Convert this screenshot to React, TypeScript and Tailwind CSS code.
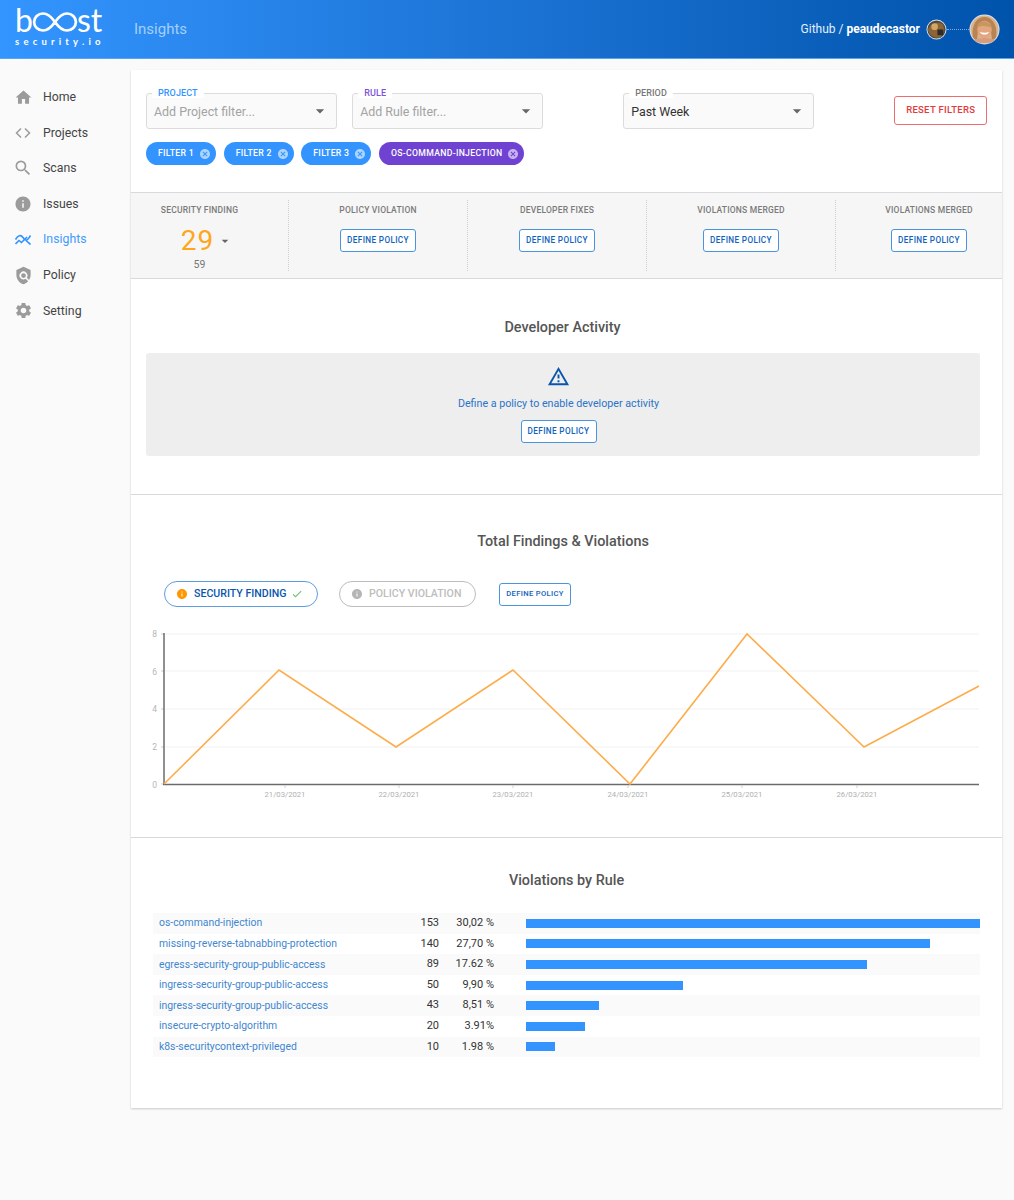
import { MdArrowDropDown, MdCancel, MdCheck, MdHome, MdInfo, MdPolicy, MdSearch, MdSettings, MdOutlineWarningAmber } from 'react-icons/md';

const navItems = [
  { label: 'Home', icon: <MdHome className="w-[19px] h-[19px]" /> },
  { label: 'Projects', icon: <CodeIcon /> },
  { label: 'Scans', icon: <MdSearch className="w-[20px] h-[20px]" /> },
  { label: 'Issues', icon: <MdInfo className="w-[18px] h-[18px]" /> },
  { label: 'Insights', icon: <InsightsIcon />, active: true },
  { label: 'Policy', icon: <MdPolicy className="w-[19px] h-[19px]" /> },
  { label: 'Setting', icon: <MdSettings className="w-[19px] h-[19px]" /> },
];

const rules = [
  { name: 'os-command-injection', count: 153, pct: '30,02 %', bar: 454 },
  { name: 'missing-reverse-tabnabbing-protection', count: 140, pct: '27,70 %', bar: 404 },
  { name: 'egress-security-group-public-access', count: 89, pct: '17.62 %', bar: 341 },
  { name: 'ingress-security-group-public-access', count: 50, pct: '9,90 %', bar: 157 },
  { name: 'ingress-security-group-public-access', count: 43, pct: '8,51 %', bar: 73 },
  { name: 'insecure-crypto-algorithm', count: 20, pct: '3.91%', bar: 59 },
  { name: 'k8s-securitycontext-privileged', count: 10, pct: '1.98 %', bar: 29 },
];

function CodeIcon() {
  return (
    <svg viewBox="0 0 16 12" className="w-[16px] h-[12px]" fill="none" stroke="currentColor" strokeWidth="1.5">
      <path d="M6 1.5 1.5 6 6 10.5M10 1.5 14.5 6 10 10.5" />
    </svg>
  );
}

function InsightsIcon() {
  return (
    <svg viewBox="0 0 16 11" className="w-[16px] h-[11px]" fill="none" stroke="currentColor" strokeWidth="1.6">
      <path d="M0.5 5.5C3 1 6 .5 8 3.500S11.500 8.500 15.500 1.500" />
      <path d="M0.500 10 4 6.500 6.500 8.500 12 3M11 6.500l4.500 4" />
    </svg>
  );
}

function Logo() {
  return (
    <div className="flex flex-col w-[95px] -mt-[3px] text-white font-['Lato',sans-serif]">
      <div className="flex items-end h-[24px]">
        <span className="text-[32px] leading-[24px] font-normal">b</span>
        <svg viewBox="0 0 44 20" className="w-[46px] h-[20px] -ml-[1px]" preserveAspectRatio="none" fill="none" stroke="currentColor" strokeWidth="2.6">
          <path d="M22 10C18 4 14 1.500 10.500 1.500A8.500 8.500 0 0 0 10.500 18.500C14 18.500 18 16 22 10C26 4 30 1.500 33.500 1.500A8.500 8.500 0 0 1 33.500 18.500C30 18.500 26 16 22 10Z" />
        </svg>
        <span className="text-[32px] leading-[24px] font-normal -ml-[1px]">st</span>
      </div>
      <span className="mt-[5px] text-[9.500px] leading-[10px] font-bold tracking-[4.200px]">security.io</span>
    </div>
  );
}

function Avatars() {
  return (
    <div className="flex items-center ml-[6px]">
      <svg viewBox="0 0 22 22" className="w-[21px] h-[21px]">
        <circle cx="11" cy="11" r="10.500" fill="#e0e0e0" />
        <circle cx="11" cy="11" r="9.500" fill="#4a4a48" />
        <path d="M2 11C4 5 12 2 17 5 20 9 19 15 15 19 9 21 3 17 2 11Z" fill="#8d6436" />
        <circle cx="9" cy="8" r="3.500" fill="#d3a566" />
        <path d="M12 11h6v6h-6Z" fill="#2d2a28" />
      </svg>
      <span className="w-[22px] border-t border-dotted border-white/50" />
      <svg viewBox="0 0 32 32" className="w-[31px] h-[31px]">
        <circle cx="16" cy="16" r="15.500" fill="#dbe4ee" />
        <circle cx="16" cy="16" r="14.500" fill="#d9b48f" />
        <path d="M4 24C2 10 9 3 16 3S30 10 28 24L24 28 22 14 10 14 8 28Z" fill="#b98453" />
        <ellipse cx="16" cy="16" rx="7.500" ry="9" fill="#e3a77f" />
        <path d="M8.500 14C10 8 13 7 17 8 21 9 23 11 23.500 14 19 13 14 11 8.500 14Z" fill="#c8965f" />
        <path d="M11 18.500C13 22 19 22 21 18.500 18 19.500 14 19.500 11 18.500Z" fill="#fff" />
        <path d="M5 27C9 24 23 24 27 27 22 31 10 31 5 27Z" fill="#d79d7c" />
      </svg>
    </div>
  );
}

function OutlinedSelect({ label, labelColor, value, muted }: { label: string; labelColor: string; value: string; muted?: boolean }) {
  return (
    <div className="relative h-[36px] w-[192px] flex items-center justify-between pl-[7px] pr-[6px] bg-[#fafafa] border-[1.5px] border-[#dcdcdc] rounded-[3px]">
      <span className={`absolute -top-[5px] left-[5px] px-[6px] bg-white text-[9px] leading-[9px] font-medium tracking-[0.1px] ${labelColor}`}>{label}</span>
      <span className={`pt-[2px] text-[12.400px] ${muted ? 'text-[#a3a3a3]' : 'text-[#333]'}`}>{value}</span>
      <MdArrowDropDown className="w-[20px] h-[20px] text-[#666]" />
    </div>
  );
}

function Chip({ label, purple }: { label: string; purple?: boolean }) {
  return (
    <span className={`inline-flex items-center h-[23px] pl-[12px] pr-[5px] rounded-full text-white text-[8.700px] font-medium tracking-[0.3px] ${purple ? 'bg-[#6f42d2]' : 'bg-[#3394ff]'}`}>
      {label}
      <MdCancel className="w-[12px] h-[12px] ml-[5px] text-white/60" />
    </span>
  );
}

function DefinePolicy({ small }: { small?: boolean }) {
  return (
    <button className={`block h-[23px] ${small ? 'w-[72px] text-[7.600px]' : 'w-[76px] text-[8.200px]'} bg-white border border-[#4a94de] rounded-[3px] text-[#0f62bd] font-medium tracking-[0.35px]`}>
      DEFINE POLICY
    </button>
  );
}

function StatCol({ title, width, className, children }: { title: string; width: string; className?: string; children: React.ReactNode }) {
  return (
    <div className={`${width} ${className ?? ''} h-[71px] flex flex-col items-center border-r border-dotted border-[#cfcfcf] last:border-r-0`}>
      <span className="mt-[5px] text-[8.500px] leading-[11px] font-medium tracking-[0.2px] text-[#7a7a7a]">{title}</span>
      {children}
    </div>
  );
}

function Chart() {
  const ys = [634, 671, 709, 747];
  const xs = [285, 399, 513, 628, 742, 857];
  const dates = ['21/03/2021', '22/03/2021', '23/03/2021', '24/03/2021', '25/03/2021', '26/03/2021'];
  return (
    <svg viewBox="140 625 840 180" className="w-[840px] h-[180px] block">
      {ys.map((y) => (
        <line key={y} x1="164" x2="979" y1={y} y2={y} stroke="#f1f1f1" />
      ))}
      {[8, 6, 4, 2, 0].map((n, i) => (
        <text key={n} x="157" y={637 + i * 37.700} textAnchor="end" fontSize="8.500" fill="#b5b5b5" fontFamily="Roboto">{n}</text>
      ))}
      {[634, 671, 709, 747, 784].map((y) => (
        <line key={y} x1="161" x2="164" y1={y} y2={y} stroke="#cfcfcf" />
      ))}
      <line x1="164" x2="164" y1="633" y2="785" stroke="#6b6b6b" strokeWidth="1.500" />
      <line x1="163" x2="979" y1="784.500" y2="784.500" stroke="#6b6b6b" strokeWidth="1.500" />
      {xs.map((x, i) => (
        <g key={x}>
          <line x1={x} x2={x} y1="785" y2="788" stroke="#cfcfcf" />
          <text x={x} y="797" textAnchor="middle" fontSize="7.700" fill="#b0b0b0" fontFamily="Roboto">{dates[i]}</text>
        </g>
      ))}
      <polyline points="164,784 279,670 396,747 513,670 630,784 747,634 864,747 979,686" fill="none" stroke="#fdac4a" strokeWidth="1.600" />
    </svg>
  );
}

export default function App() {
  return (
    <div className="min-h-[1200px] bg-[#fafafa] font-['Roboto',sans-serif]">
      <header className="h-[59px] flex items-center justify-between pl-[15px] pr-[14px] bg-gradient-to-r from-[#3395ff] to-[#0053ab] border-b border-[#5aa5ef]">
        <div className="flex items-center">
          <Logo />
          <span className="ml-[24px] pt-[1px] text-[15px] text-[#a3cfff]">Insights</span>
        </div>
        <div className="flex items-center text-[12px] text-white">
          <span className="text-[#e3effb]">Github /&nbsp;</span>
          <span className="font-bold">peaudecastor</span>
          <Avatars />
        </div>
      </header>

      <div className="flex">
        <nav className="w-[131px] shrink-0 pt-[20.500px]">
          {navItems.map((item) => (
            <div key={item.label} className={`h-[35.600px] flex items-center text-[12.300px] ${item.active ? 'text-[#429bff]' : 'text-[#444]'}`}>
              <span className={`w-[48px] pl-[11px] pr-[13px] flex justify-center shrink-0 -mr-[5px] ${item.active ? 'text-[#3394ff]' : 'text-[#9b9b9b]'}`}>{item.icon}</span>
              {item.label}
            </div>
          ))}
        </nav>

        <main className="w-[871px] mt-[11px] mb-[92px] bg-white shadow-[0_1px_2px_rgba(0,0,0,0.2)]">
          <section className="h-[122px] px-[15px] pt-[23px]">
            <div className="flex items-start">
              <OutlinedSelect label="PROJECT" labelColor="text-[#3394ff]" value="Add Project filter..." muted />
              <div className="w-[15px]" />
              <OutlinedSelect label="RULE" labelColor="text-[#7b52dc]" value="Add Rule filter..." muted />
              <div className="w-[80px]" />
              <OutlinedSelect label="PERIOD" labelColor="text-[#777]" value="Past Week" />
              <button className="ml-[80px] mt-[3px] w-[93px] h-[29px] border border-[#ec6e6e] rounded-[3px] text-[#e23b3b] text-[9.500px] font-medium tracking-[0.3px]">
                RESET FILTERS
              </button>
            </div>
            <div className="flex gap-[7.600px] mt-[13px]">
              <Chip label="FILTER 1" />
              <Chip label="FILTER 2" />
              <Chip label="FILTER 3" />
              <Chip label="OS-COMMAND-INJECTION" purple />
            </div>
          </section>

          <section className="h-[87px] flex items-center bg-[#f6f6f6] border-y border-[#d8d8dd]">
            <StatCol title="SECURITY FINDING" width="w-[158px]" className="pr-[20px]">
              <div className="flex items-center mt-[7px] ml-[15px]">
                <span className="text-[28px] leading-[36px] tracking-[1px] text-[#ffa61a]">29</span>
                <MdArrowDropDown className="w-[16px] h-[16px] ml-[3px] text-[#666]" />
              </div>
              <span className="text-[10.500px] leading-[12px] text-[#777]">59</span>
            </StatCol>
            <StatCol title="POLICY VIOLATION" width="w-[179px]"><div className="mt-[13px]"><DefinePolicy /></div></StatCol>
            <StatCol title="DEVELOPER FIXES" width="w-[179px]"><div className="mt-[13px]"><DefinePolicy /></div></StatCol>
            <StatCol title="VIOLATIONS MERGED" width="w-[189px]"><div className="mt-[13px]"><DefinePolicy /></div></StatCol>
            <StatCol title="VIOLATIONS MERGED" width="w-[166px]" className="pl-[20px]"><div className="mt-[13px]"><DefinePolicy /></div></StatCol>
          </section>

          <section className="h-[216px] px-[15px] border-b border-[#d8d8dd]">
            <h2 className="pt-[40px] pr-[8px] text-center text-[14.400px] leading-[18px] font-medium text-[#555]">Developer Activity</h2>
            <div className="mt-[16px] pr-[9px] w-[834px] h-[103px] flex flex-col items-center bg-[#eeeeee] rounded-[3px]">
              <MdOutlineWarningAmber className="mt-[12px] w-[23px] h-[23px] text-[#0a56ad]" />
              <p className="mt-[9px] text-[10.700px] leading-[14px] text-[#2b74c7]">Define a policy to enable developer activity</p>
              <div className="mt-[9px]"><DefinePolicy /></div>
            </div>
          </section>

          <section className="h-[343px] border-b border-[#d8d8dd]">
            <h2 className="pt-[38px] pr-[7px] text-center text-[14.400px] leading-[18px] font-medium text-[#555]">Total Findings & Violations</h2>
            <div className="flex items-center mt-[30px] ml-[33px]">
              <span className="w-[154px] h-[26px] flex items-center pl-[11px] rounded-full border border-[#5b9de0] bg-white text-[10.600px] font-medium text-[#0a56ad]">
                <MdInfo className="w-[12px] h-[12px] mr-[6px] text-[#ff9800]" />
                SECURITY FINDING
                <MdCheck className="w-[12px] h-[12px] ml-[5px] text-[#6ebd6e]" />
              </span>
              <span className="ml-[21px] w-[137px] h-[26px] flex items-center pl-[11px] rounded-full border border-[#bdbdbd] text-[10.600px] font-medium text-[#bdbdbd]">
                <MdInfo className="w-[12px] h-[12px] mr-[6px] text-[#b5b5b5]" />
                POLICY VIOLATION
              </span>
              <div className="ml-[23px]"><DefinePolicy small /></div>
            </div>
            <div className="mt-[18px] ml-[9px]"><Chart /></div>
          </section>

          <section className="px-[22px] pt-[34px] h-[270px]">
            <h2 className="text-center text-[14.400px] leading-[18px] font-medium text-[#555]">Violations by Rule</h2>
            <div className="mt-[23px] w-[827px]">
              {rules.map((rule, i) => (
                <div key={i} className={`h-[20.600px] flex items-center text-[11px] ${i % 2 === 0 ? 'bg-[#fafafa]' : ''}`}>
                  <span className="w-[250px] pl-[6px] text-[10.400px] text-[#3f86d0]">{rule.name}</span>
                  <span className="w-[36px] text-right text-[#333]">{rule.count}</span>
                  <span className="w-[55px] text-right text-[#333]">{rule.pct}</span>
                  <span className="ml-[32px] h-[9px] bg-[#3394ff]" style={{ width: rule.bar }} />
                </div>
              ))}
            </div>
          </section>
        </main>
      </div>
    </div>
  );
}
